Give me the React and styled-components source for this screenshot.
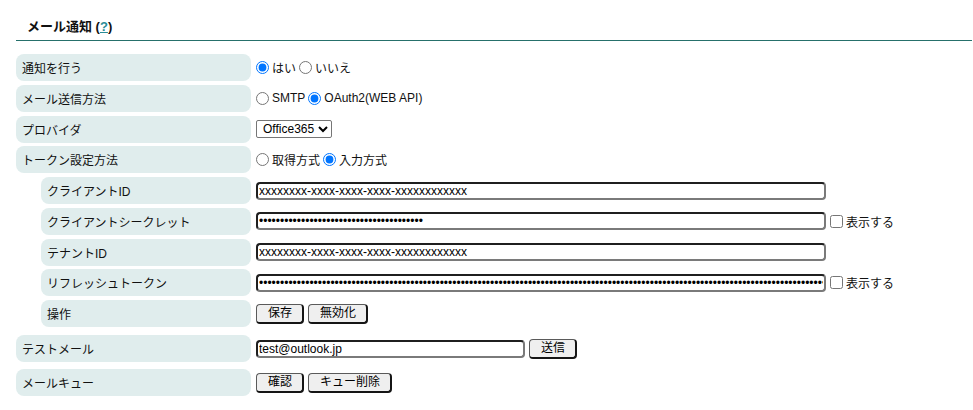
import React, { useState } from 'react';
import styled, { createGlobalStyle } from 'styled-components';

const GlobalStyle = createGlobalStyle`
  body {
    margin: 0;
    background: #fff;
    font-family: "Liberation Sans", "Noto Sans CJK JP", sans-serif;
    color: #111;
  }
`;

const Page = styled.div`
  padding: 0 1px 0 16px;
`;

const Title = styled.h2`
  margin: 0;
  padding: 19px 0 6px 11px;
  font-size: 13px;
  line-height: 15px;
  font-weight: bold;
  border-bottom: 1px solid #26706b;
`;

const Help = styled.a`
  color: #2a8c96;
  text-decoration: underline;
`;

const Form = styled.div`
  display: flex;
  flex-direction: column;
  gap: 3.75px;
  margin-top: 13px;
`;

const Group = styled.div`
  display: flex;
  flex-direction: column;
  gap: 7px;
  margin-top: 4.25px;
`;

const Row = styled.div`
  display: flex;
  align-items: stretch;
  height: 27px;
`;

const Label = styled.div`
  box-sizing: border-box;
  width: ${p => (p.$sub ? '210px' : '235px')};
  margin-left: ${p => (p.$sub ? '25px' : '0')};
  padding-left: 6px;
  display: flex;
  align-items: center;
  background: #e0eded;
  border-radius: 8px;
  font-size: 12px;
`;

const Value = styled.div`
  display: flex;
  align-items: center;
  padding-left: 5px;
  font-size: 12px;
`;

const Choice = styled.label`
  display: inline-flex;
  align-items: center;
  margin-right: 3px;
  white-space: nowrap;
`;

const Radio = styled.input.attrs({ type: 'radio' })`
  width: 13px;
  height: 13px;
  margin: 0 3px 0 0;
`;

const Check = styled.input.attrs({ type: 'checkbox' })`
  width: 13px;
  height: 13px;
  margin: 0 3px 0 4px;
`;

const Select = styled.select`
  height: 18px;
  padding: 0 0 0 2px;
  font: 12px "Liberation Sans", sans-serif;
  color: #000;
  border: 1px solid #767676;
  border-radius: 2px;
  background: #fff;
`;

const TextInput = styled.input`
  box-sizing: border-box;
  width: ${p => p.$w}px;
  height: 18px;
  padding: 0 1px;
  font: 12px "Liberation Sans", sans-serif;
  color: #000;
  border-style: solid;
  border-width: 2px;
  border-color: #1f1f1f #7a7a7a #7a7a7a #1f1f1f;
  border-radius: 4px;
  background: #fff;
`;

const Button = styled.button`
  height: 20px;
  margin-right: 4px;
  padding: 0 10px 0 11px;
  font: 12px "Liberation Sans", "Noto Sans CJK JP", sans-serif;
  line-height: 14px;
  color: #000;
  background: #efefef;
  border-style: solid;
  border-width: 1px 2px 2px 1px;
  border-color: #5a5a5a #151515 #151515 #5a5a5a;
  border-radius: 4px;
`;

const SendButton = styled(Button)`
  margin-left: 4px;
`;

const secret = '•'.repeat(39);
const refresh = 'x'.repeat(200);

export default function App() {
  const [notify, setNotify] = useState('yes');
  const [method, setMethod] = useState('oauth');
  const [token, setToken] = useState('input');

  return (
    <Page>
      <GlobalStyle />
      <Title>
        メール通知 (<Help href="#">?</Help>)
      </Title>
      <Form>
        <Row>
          <Label>通知を行う</Label>
          <Value>
            <Choice><Radio checked={notify === 'yes'} onChange={() => setNotify('yes')} />はい</Choice>
            <Choice><Radio checked={notify === 'no'} onChange={() => setNotify('no')} />いいえ</Choice>
          </Value>
        </Row>
        <Row>
          <Label>メール送信方法</Label>
          <Value>
            <Choice><Radio checked={method === 'smtp'} onChange={() => setMethod('smtp')} />SMTP</Choice>
            <Choice><Radio checked={method === 'oauth'} onChange={() => setMethod('oauth')} />OAuth2(WEB API)</Choice>
          </Value>
        </Row>
        <Row>
          <Label>プロバイダ</Label>
          <Value>
            <Select defaultValue="o365">
              <option value="o365">Office365</option>
              <option value="gmail">Gmail</option>
            </Select>
          </Value>
        </Row>
        <Row>
          <Label>トークン設定方法</Label>
          <Value>
            <Choice><Radio checked={token === 'get'} onChange={() => setToken('get')} />取得方式</Choice>
            <Choice><Radio checked={token === 'input'} onChange={() => setToken('input')} />入力方式</Choice>
          </Value>
        </Row>
        <Row>
          <Label $sub>クライアントID</Label>
          <Value>
            <TextInput $w={570} defaultValue="xxxxxxxx-xxxx-xxxx-xxxx-xxxxxxxxxxxx" />
          </Value>
        </Row>
        <Row>
          <Label $sub>クライアントシークレット</Label>
          <Value>
            <TextInput $w={570} type="password" defaultValue={secret} />
            <Choice><Check />表示する</Choice>
          </Value>
        </Row>
        <Row>
          <Label $sub>テナントID</Label>
          <Value>
            <TextInput $w={570} defaultValue="xxxxxxxx-xxxx-xxxx-xxxx-xxxxxxxxxxxx" />
          </Value>
        </Row>
        <Row>
          <Label $sub>リフレッシュトークン</Label>
          <Value>
            <TextInput $w={570} type="password" defaultValue={refresh} />
            <Choice><Check />表示する</Choice>
          </Value>
        </Row>
        <Row>
          <Label $sub>操作</Label>
          <Value>
            <Button>保存</Button>
            <Button>無効化</Button>
          </Value>
        </Row>
        <Group>
          <Row>
            <Label>テストメール</Label>
            <Value>
              <TextInput $w={269} defaultValue="test@outlook.jp" />
              <SendButton>送信</SendButton>
            </Value>
          </Row>
          <Row>
            <Label>メールキュー</Label>
            <Value>
              <Button>確認</Button>
              <Button>キュー削除</Button>
            </Value>
          </Row>
        </Group>
      </Form>
    </Page>
  );
}
